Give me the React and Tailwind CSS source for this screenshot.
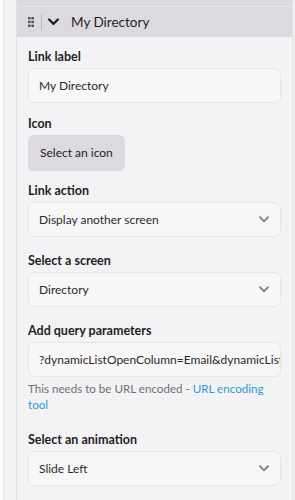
import React from 'react'

const font = { fontFamily: 'Lato, "Open Sans", sans-serif' }

function Chevron({ className }) {
  return (
    <svg viewBox="0 0 10 7" className={className} fill="none">
      <path d="M1 1.2 L5 5.2 L9 1.2" stroke="currentColor" strokeWidth="2" strokeLinecap="round" strokeLinejoin="round" />
    </svg>
  )
}

function Grip() {
  return (
    <svg viewBox="0 0 6 10" className="h-[10px] w-[6px] text-[#555]" fill="currentColor">
      <rect x="0" y="0" width="2.6" height="2.4" />
      <rect x="3.4" y="0" width="2.6" height="2.4" />
      <rect x="0" y="3.8" width="2.6" height="2.4" />
      <rect x="3.4" y="3.8" width="2.6" height="2.4" />
      <rect x="0" y="7.6" width="2.6" height="2.4" />
      <rect x="3.4" y="7.6" width="2.6" height="2.4" />
    </svg>
  )
}

function Label({ children, className = '' }) {
  return (
    <div className={`h-[18px] text-[12.5px] font-bold leading-[18px] text-[#1f1f1f] ${className}`}>
      {children}
    </div>
  )
}

function Field({ value, select = false, clip = false }) {
  return (
    <div
      className={`mt-[2px] flex h-[35px] items-center overflow-hidden rounded-[6px] border border-[#e7e5e8] bg-[#f8f7f8] pl-[10px] ${clip ? 'pr-0' : 'pr-[11px]'}`}
    >
      <span className="flex-1 overflow-hidden whitespace-nowrap text-[12px] text-[#2a2a2a]">{value}</span>
      {select && <Chevron className="h-[7px] w-[10px] text-[#8a8a8a]" />}
    </div>
  )
}

export default function App() {
  return (
    <div className="h-[500px] w-[295px] overflow-hidden bg-[#fafafa] pl-[3px]" style={font}>
      <div className="h-full border-l border-r border-[#e4e3e6] bg-[#f3f2f4] pl-[12px] pr-[1px]">
        <div className="h-full border-l border-r border-[#e2e1e4] bg-[#f3f2f4]">
          <div className="h-[7px] border-b border-[#e6e5e9] bg-[#dcdae0]" />
          <div className="flex h-[30px] items-center bg-[#dcdae0] pl-[11px]">
            <Grip />
            <div className="ml-[7px] h-[16px] w-px bg-[#b9b8bd]" />
            <Chevron className="ml-[6px] h-[8px] w-[11px] text-[#1f1f1f]" />
            <span className="ml-[12px] text-[13.5px] text-[#1f1f1f]">My Directory</span>
          </div>
          <div className="px-[11px] pt-[11px]">
            <Label>Link label</Label>
            <Field value="My Directory" />

            <Label className="mt-[12px]">Icon</Label>
            <button
              type="button"
              className="mt-[2px] h-[36px] rounded-[6px] bg-[#dcdae0] px-[12px] text-[12px] text-[#222]"
            >
              Select an icon
            </button>

            <Label className="mt-[11px]">Link action</Label>
            <Field value="Display another screen" select />

            <Label className="mt-[15px]">Select a screen</Label>
            <Field value="Directory" select />

            <Label className="mt-[15px]">Add query parameters</Label>
            <Field value="?dynamicListOpenColumn=Email&dynamicListOpenValue" clip />
            <p className="mt-[4px] text-[11.6px] leading-[16px] text-[#6f6e72]">
              This needs to be URL encoded - <span className="text-[#2b9bd3]">URL encoding tool</span>
            </p>

            <Label className="mt-[18px]">Select an animation</Label>
            <Field value="Slide Left" select />
          </div>
        </div>
      </div>
    </div>
  )
}
